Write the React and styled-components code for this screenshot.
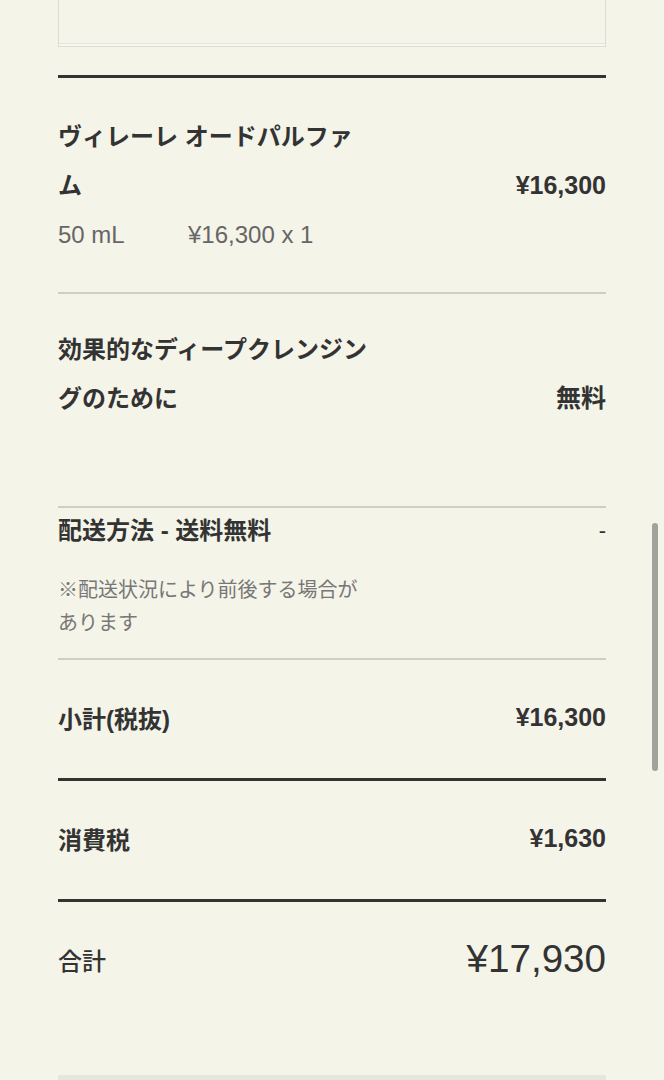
import React from "react";
import styled, { createGlobalStyle } from "styled-components";

const Global = createGlobalStyle`
  html, body { margin: 0; padding: 0; background: #f4f4e8; }
  body {
    font-family: "Liberation Sans", "Noto Sans CJK JP", sans-serif;
    color: #333;
  }
`;

const Page = styled.div`
  padding: 0 58px;
  min-height: 1080px;
  box-sizing: border-box;
  overflow: hidden;
`;

const MessageBox = styled.div`
  height: 46px;
  border: 1px solid #dcdcd2;
  border-top: none;
  box-shadow: inset 0 -2px 0 #f8f8f0, inset 0 -3px 0 #e4e4dc;
  background: #f4f4e8;
`;

const Rule = styled.div`
  height: ${(p) => (p.$thick ? "3px" : "2px")};
  background: ${(p) => (p.$thick ? "#333" : "#cfcfc6")};
  margin-top: ${(p) => p.$top || 0}px;
`;

const Item = styled.div`
  padding: ${(p) => p.$pt ?? 34}px 0 ${(p) => p.$pb ?? 33}px;
`;

const ItemHead = styled.div`
  display: flex;
  justify-content: space-between;
  align-items: flex-end;
`;

const ItemName = styled.div`
  width: 316px;
  font-size: 24px;
  font-weight: 700;
  line-height: 49px;
`;

const Price = styled.div`
  font-size: 25px;
  font-weight: 700;
  line-height: 49px;
  white-space: nowrap;
`;

const Meta = styled.div`
  display: flex;
  height: 49px;
  align-items: center;
  font-size: 24px;
  color: #666;
`;

const Volume = styled.span`
  width: 130px;
`;

const Shipping = styled.div`
  padding: 0 0 18px;
`;

const ShippingHead = styled.div`
  display: flex;
  justify-content: space-between;
  align-items: center;
  height: 40px;
  font-size: 24px;
  font-weight: 700;
`;

const Dash = styled.span`
  font-weight: 400;
  font-size: 22px;
  padding-top: 6px;
  color: #333;
`;

const Note = styled.div`
  margin-top: 26px;
  width: 310px;
  font-size: 20px;
  line-height: 33px;
  color: #777;
`;

const SummaryRow = styled.div`
  display: flex;
  justify-content: space-between;
  align-items: center;
  height: 118px;
  padding-bottom: 3px;
  box-sizing: border-box;
  font-size: 24px;
  font-weight: 700;
`;

const SummaryPrice = styled.span`
  font-size: 25px;
`;

const TotalRow = styled.div`
  display: flex;
  justify-content: space-between;
  align-items: center;
  height: 118px;
  padding-bottom: 4px;
  box-sizing: border-box;
  font-size: 24px;
`;

const TotalLabel = styled.span`
  font-weight: 500;
`;

const TotalPrice = styled.span`
  font-size: 38.6px;
  font-weight: 400;
`;

const NextBox = styled.div`
  margin-top: 55px;
  height: 40px;
  background: #e6e6dd;
`;

const ScrollThumb = styled.div`
  position: fixed;
  left: 652px;
  top: 523px;
  width: 6px;
  height: 248px;
  border-radius: 3px;
  background: #a2a29a;
`;

export default function App() {
  return (
    <>
      <Global />
      <Page>
        <MessageBox />
        <Rule $thick $top={28} />
        <Item>
          <ItemHead>
            <ItemName>ヴィレーレ オードパルファム</ItemName>
            <Price>¥16,300</Price>
          </ItemHead>
          <Meta>
            <Volume>50 mL</Volume>
            <span>¥16,300 x 1</span>
          </Meta>
        </Item>
        <Rule />
        <Item $pt={31} $pb={34}>
          <ItemHead>
            <ItemName>効果的なディープクレンジングのために</ItemName>
            <Price>無料</Price>
          </ItemHead>
          <Meta />
        </Item>
        <Rule />
        <Shipping>
          <ShippingHead>
            <span>配送方法 - 送料無料</span>
            <Dash>-</Dash>
          </ShippingHead>
          <Note>※配送状況により前後する場合があります</Note>
        </Shipping>
        <Rule />
        <SummaryRow>
          <span>小計(税抜)</span>
          <SummaryPrice>¥16,300</SummaryPrice>
        </SummaryRow>
        <Rule $thick />
        <SummaryRow>
          <span>消費税</span>
          <SummaryPrice>¥1,630</SummaryPrice>
        </SummaryRow>
        <Rule $thick />
        <TotalRow>
          <TotalLabel>合計</TotalLabel>
          <TotalPrice>¥17,930</TotalPrice>
        </TotalRow>
        <NextBox />
      </Page>
      <ScrollThumb />
    </>
  );
}
